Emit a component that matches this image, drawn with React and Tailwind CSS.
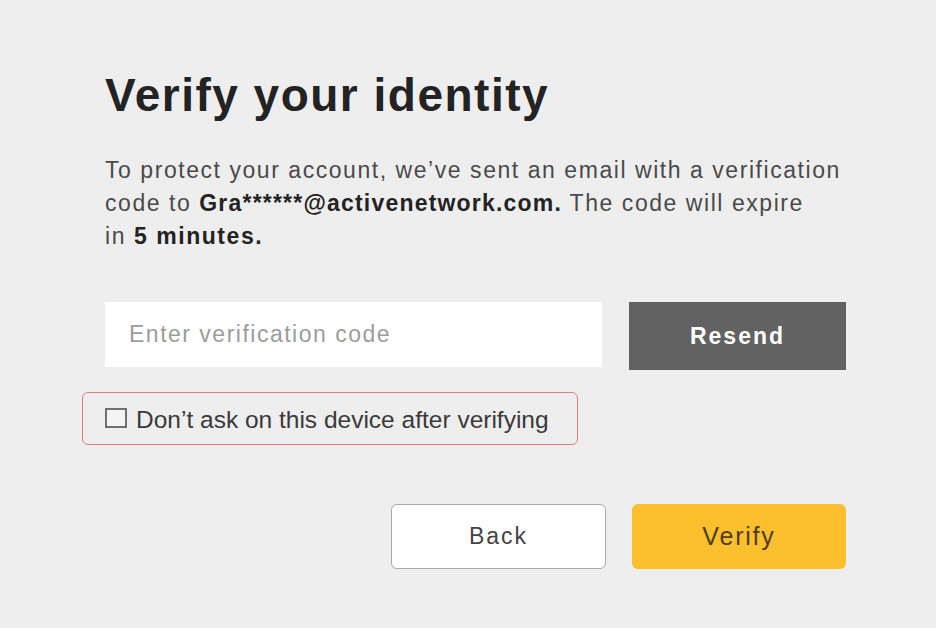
import React from "react";

export default function App() {
  return (
    <div className="min-h-screen w-full bg-[#eeeeee] font-['Liberation_Sans',Arial,sans-serif]">
      <div className="flex w-[846px] flex-col pl-[105px] pt-[72px]">
        <h1 className="text-[46px] font-bold leading-none tracking-[1.5px] text-[#232323]">
          Verify your identity
        </h1>
        <p className="mt-[36px] text-[23px] leading-[33px] tracking-[1.55px] text-[#4a4a4a]">
          To protect your account, we’ve sent an email with a verification
          <br />
          code to <span className="font-bold tracking-[1.2px] text-[#232323]">Gra******@activenetwork.com.</span> The code will expire
          <br />
          in <span className="font-bold text-[#232323]">5 minutes.</span>
        </p>

        <div className="mt-[49px] flex items-start gap-[27px]">
          <input
            type="text"
            placeholder="Enter verification code"
            className="h-[65px] w-[497px] bg-white pl-[24px] font-['Liberation_Sans',Arial,sans-serif] text-[23px] tracking-[1.5px] text-[#333] outline-none placeholder:text-[#9c9c9c]"
          />
          <button className="h-[68px] w-[217px] bg-[#626262] font-['Liberation_Sans',Arial,sans-serif] text-[23px] font-bold tracking-[2px] text-white">
            Resend
          </button>
        </div>

        <label className="-ml-[23px] mt-[22px] flex h-[53px] w-[496px] items-center gap-[9px] rounded-[6px] border-[1.5px] border-[#e08080] pl-[22px]">
          <span className="-mt-[2px] block h-[20px] w-[22px] border-2 border-[#707070] bg-[#f3f3f3]" />
          <span className="mt-[4px] text-[24.5px] leading-none text-[#3a3a3a]">
            Don’t ask on this device after verifying
          </span>
        </label>

        <div className="mt-[59px] flex justify-end gap-[26px]">
          <button className="h-[65px] w-[215px] rounded-[6px] border-[1.5px] border-[#a9a9a9] bg-white font-['Liberation_Sans',Arial,sans-serif] text-[23px] tracking-[2px] text-[#444]">
            Back
          </button>
          <button className="h-[65px] w-[214px] rounded-[6px] bg-[#fcbf2e] font-['Liberation_Sans',Arial,sans-serif] text-[25px] tracking-[1.8px] text-[#4f3d12]">
            Verify
          </button>
        </div>
      </div>
    </div>
  );
}
